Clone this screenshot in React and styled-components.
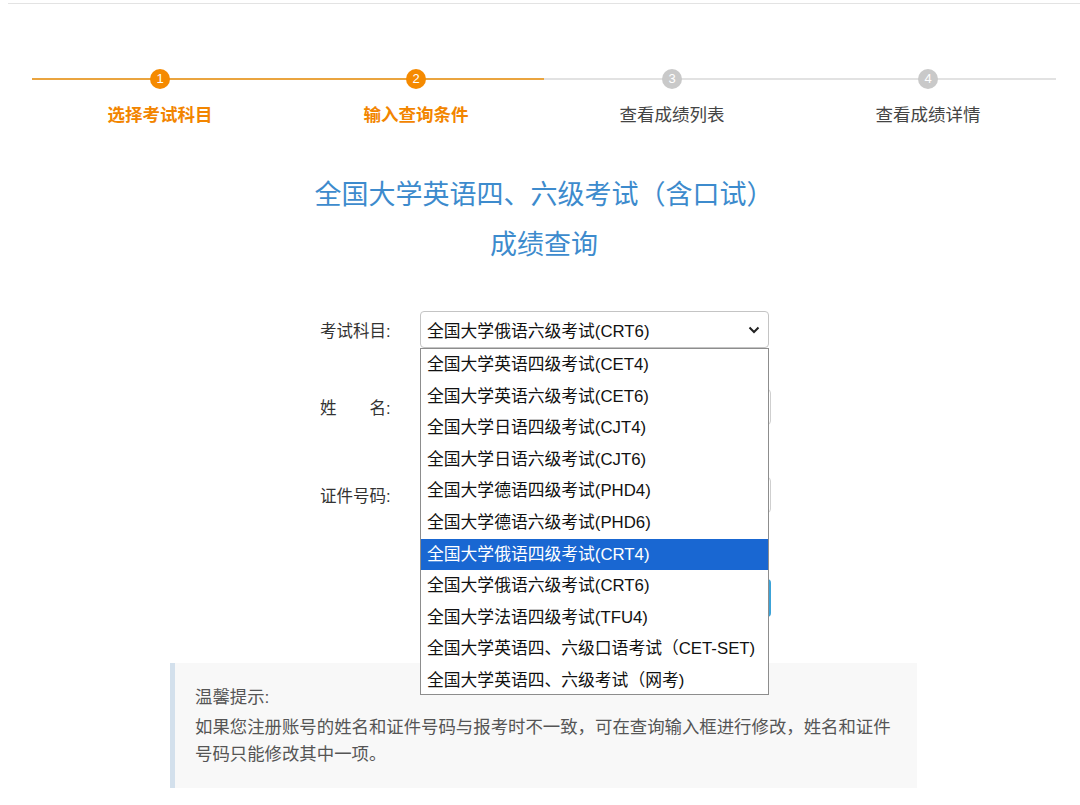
import styled, { createGlobalStyle } from "styled-components"

const GlobalStyle = createGlobalStyle`
body {
  margin: 0;
  background: #fff;
  font-family: "Liberation Sans", "Noto Sans CJK SC", sans-serif;
  color: #333;
}
* { box-sizing: border-box; }
`

const TopRule = styled.div`
height: 4px;
margin-left: 8px;
border-bottom: 1px solid #e3e3e3;
`
const Page = styled.div`
width: 1024px;
margin-left: 32px;
`
const Steps = styled.div`
display: grid;
grid-template-columns: repeat(4, 1fr);
margin-top: 65px;
`
const Step = styled.div`
position: relative;
display: flex;
flex-direction: column;
align-items: center;
`
const Track = styled.span`
position: absolute;
left: 0;
right: 0;
top: 9px;
height: 2px;
background: ${p => (p.$done ? "#eaa43f" : "#e2e2e2")};
`
const Dot = styled.span`
position: relative;
width: 20px;
height: 20px;
border-radius: 50%;
background: ${p => (p.$done ? "#f58a00" : "#c9c9c9")};
color: #fff;
font-size: 13px;
line-height: 20px;
text-align: center;
`
const StepLabel = styled.div`
margin-top: 14px;
font-size: 17.5px;
line-height: 24px;
color: ${p => (p.$done ? "#f28500" : "#444")};
font-weight: ${p => (p.$done ? 700 : 400)};
`
const Title = styled.h1`
margin: 43px 0 0;
text-align: center;
font-size: 27px;
line-height: 50px;
font-weight: 400;
color: #3d8bcd;
`
const Form = styled.div`
margin-top: 41px;
padding-left: 288px;
`
const Row = styled.div`
display: flex;
align-items: center;
margin-top: ${p => p.$gap || 0}px;
`
const Label = styled.label`
width: 100px;
font-size: 16.5px;
color: #333;
white-space: pre;
`
const SelectWrap = styled.div`
position: relative;
`
const SelectBox = styled.div`
width: 349px;
height: 37px;
border: 1px solid #c4c4c4;
border-radius: 4px;
display: flex;
align-items: center;
justify-content: space-between;
padding: 0 8px 0 6px;
font-size: 16.8px;
color: #111;
`
const DropList = styled.ul`
position: absolute;
z-index: 5;
top: 37px;
left: 0;
width: 349px;
height: 347px;
margin: 0;
padding: 0;
list-style: none;
background: #fff;
border: 1px solid #8d8d8d;
overflow: hidden;
`
const Option = styled.li`
height: 31.6px;
line-height: 32px;
padding-left: 6px;
font-size: 16.8px;
white-space: nowrap;
color: ${p => (p.$active ? "#fff" : "#111")};
background: ${p => (p.$active ? "#1967d2" : "transparent")};
`
const Input = styled.input`
width: 351px;
height: 36px;
border: 1px solid #cfcfcf;
border-radius: 4px;
padding: 0 8px;
font-size: 16px;
`
const Submit = styled.button`
margin-left: 100px;
width: 351px;
height: 38px;
border: none;
border-radius: 4px;
background: #3ca3d8;
`
const Tip = styled.div`
margin: 46px 0 0 138px;
width: 747px;
background: #f8f8f8;
border-left: 5px solid #d3e0ec;
padding: 21px 16px 20px 20px;
font-size: 17.4px;
line-height: 27px;
color: #555;
`
const TipTitle = styled.div`
margin-bottom: 3px;
`

const steps = ["选择考试科目", "输入查询条件", "查看成绩列表", "查看成绩详情"]
const options = [
  "全国大学英语四级考试(CET4)",
  "全国大学英语六级考试(CET6)",
  "全国大学日语四级考试(CJT4)",
  "全国大学日语六级考试(CJT6)",
  "全国大学德语四级考试(PHD4)",
  "全国大学德语六级考试(PHD6)",
  "全国大学俄语四级考试(CRT4)",
  "全国大学俄语六级考试(CRT6)",
  "全国大学法语四级考试(TFU4)",
  "全国大学英语四、六级口语考试（CET-SET)",
  "全国大学英语四、六级考试（网考)",
]

const Chevron = () => (
  <svg width="12" height="8" viewBox="0 0 12 8">
    <polyline points="1.5,1.5 6,6 10.5,1.5" fill="none" stroke="#222" strokeWidth="2" />
  </svg>
)

export default function App() {
  return (
    <>
      <GlobalStyle />
      <TopRule />
      <Page>
        <Steps>
          {steps.map((s, i) => (
            <Step key={s}>
              <Track $done={i < 2} />
              <Dot $done={i < 2}>{i + 1}</Dot>
              <StepLabel $done={i < 2}>{s}</StepLabel>
            </Step>
          ))}
        </Steps>
        <Title>
          全国大学英语四、六级考试（含口试）
          <br />
          成绩查询
        </Title>
        <Form>
          <Row>
            <Label>考试科目:</Label>
            <SelectWrap>
              <SelectBox>
                <span>全国大学俄语六级考试(CRT6)</span>
                <Chevron />
              </SelectBox>
              <DropList>
                {options.map((o, i) => (
                  <Option key={o} $active={i === 6}>{o}</Option>
                ))}
              </DropList>
            </SelectWrap>
          </Row>
          <Row $gap={41}>
            <Label>{"姓　　名:"}</Label>
            <Input />
          </Row>
          <Row $gap={52}>
            <Label>证件号码:</Label>
            <Input />
          </Row>
          <Row $gap={66}>
            <Submit aria-label="查询" />
          </Row>
        </Form>
        <Tip>
          <TipTitle>温馨提示:</TipTitle>
          如果您注册账号的姓名和证件号码与报考时不一致，可在查询输入框进行修改，姓名和证件号码只能修改其中一项。
        </Tip>
      </Page>
    </>
  )
}
